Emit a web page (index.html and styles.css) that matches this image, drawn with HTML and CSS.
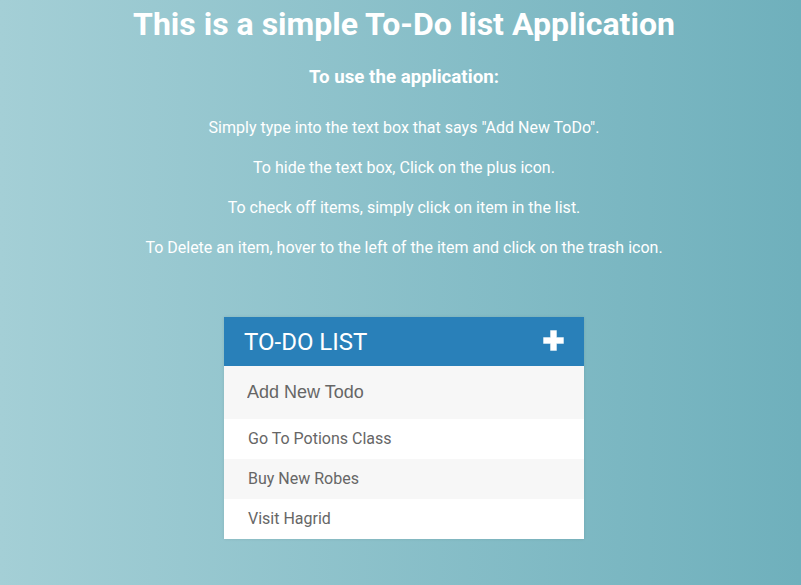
FILE: index.html
```html
<!DOCTYPE html>
<html>
<head>
<meta charset="utf-8">
<link rel="stylesheet" href="styles.css">
</head>
<body>
<div class="page">
  <h1 class="title">This is a simple To-Do list Application</h1>
  <h3 class="subtitle">To use the application:</h3>
  <p class="line">Simply type into the text box that says "Add New ToDo".</p>
  <p class="line">To hide the text box, Click on the plus icon.</p>
  <p class="line">To check off items, simply click on item in the list.</p>
  <p class="line">To Delete an item, hover to the left of the item and click on the trash icon.</p>

  <div class="card">
    <div class="card-head">
      <span class="card-title">TO-DO LIST</span>
      <svg class="plus" width="21" height="21" viewBox="0 0 21 21"><path d="M7.5 0.5h6v7h7v6h-7v7h-6v-7h-7v-6h7z" fill="#fff" stroke="#fff" stroke-width="0.4" stroke-linejoin="round"/></svg>
    </div>
    <input class="new-todo" type="text" placeholder="Add New Todo">
    <ul class="todos">
      <li>Go To Potions Class</li>
      <li>Buy New Robes</li>
      <li>Visit Hagrid</li>
    </ul>
  </div>
</div>
</body>
</html>
```
FILE: styles.css
```css
html, body {
  margin: 0;
  padding: 0;
  height: 100%;
}
body {
  background: linear-gradient(to right, #a4cfd6, #6fb0bc);
  font-family: Roboto, "Liberation Sans", sans-serif;
  color: #fff;
  overflow: hidden;
}
.page {
  padding-left: 7px;
  text-align: center;
}
.title {
  font-size: 32px;
  font-weight: 700;
  margin: 0;
  padding-top: 5px;
  line-height: 38px;
}
.subtitle {
  font-size: 18.72px;
  font-weight: 700;
  margin: 23px 0 28px;
  line-height: 22px;
}
.line {
  font-size: 16px;
  margin: 0 0 16px;
  line-height: 24px;
}
.card {
  width: 360px;
  margin: 57px auto 0;
  text-align: left;
  box-shadow: 0 0 3px rgba(0,0,0,0.1);
}
.card-head {
  background: #2980b9;
  height: 49px;
  display: flex;
  align-items: center;
  justify-content: space-between;
  padding: 0 20px 0 20px;
}
.card-title {
  font-size: 24px;
  color: #fff;
  font-weight: 400;
  padding-top: 1px;
}
.plus {
  display: block;
  margin-top: -3px;
}
.new-todo {
  display: block;
  box-sizing: border-box;
  width: 100%;
  height: 53px;
  border: 0;
  outline: none;
  background: #f7f7f7;
  padding: 0 23px 1px;
  font-family: "Liberation Sans", Arial, sans-serif;
  font-size: 18px;
  color: #666;
}
.new-todo::placeholder {
  color: #666;
  opacity: 1;
}
.todos {
  list-style: none;
  margin: 0;
  padding: 0;
}
.todos li {
  height: 40px;
  line-height: 40px;
  padding-left: 24px;
  font-size: 16px;
  color: #666;
  background: #fff;
}
.todos li:nth-child(2n) {
  background: #f7f7f7;
}
```
